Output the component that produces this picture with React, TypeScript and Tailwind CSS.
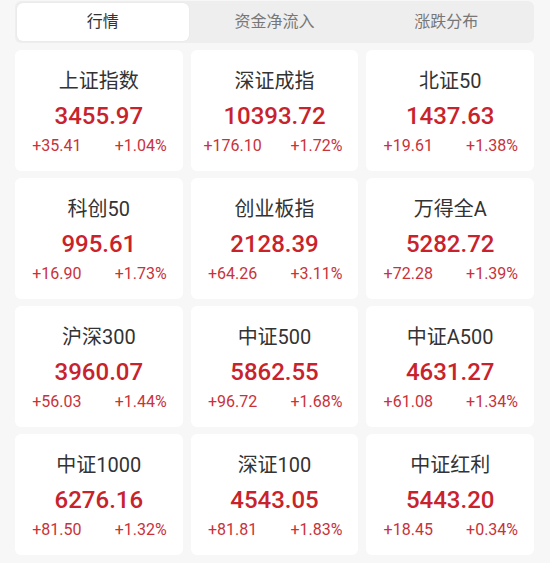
import React, { useState } from "react";

type IndexItem = {
  name: string;
  price: string;
  change: string;
  percent: string;
};

const indices: IndexItem[] = [
  { name: "上证指数", price: "3455.97", change: "+35.41", percent: "+1.04%" },
  { name: "深证成指", price: "10393.72", change: "+176.10", percent: "+1.72%" },
  { name: "北证50", price: "1437.63", change: "+19.61", percent: "+1.38%" },
  { name: "科创50", price: "995.61", change: "+16.90", percent: "+1.73%" },
  { name: "创业板指", price: "2128.39", change: "+64.26", percent: "+3.11%" },
  { name: "万得全A", price: "5282.72", change: "+72.28", percent: "+1.39%" },
  { name: "沪深300", price: "3960.07", change: "+56.03", percent: "+1.44%" },
  { name: "中证500", price: "5862.55", change: "+96.72", percent: "+1.68%" },
  { name: "中证A500", price: "4631.27", change: "+61.08", percent: "+1.34%" },
  { name: "中证1000", price: "6276.16", change: "+81.50", percent: "+1.32%" },
  { name: "深证100", price: "4543.05", change: "+81.81", percent: "+1.83%" },
  { name: "中证红利", price: "5443.20", change: "+18.45", percent: "+0.34%" },
];

const tabs = ["行情", "资金净流入", "涨跌分布"];

const IndexCard = ({ item }: { item: IndexItem }) => {
  return (
    <div className="h-[121px] rounded-md bg-white pt-[17px] text-center">
      <div className="text-[20px] leading-[28px] text-[#333333]">
        {item.name}
      </div>
      <div className="mt-[6px] text-[24px] leading-[30px] font-medium text-[#c8232c]">
        {item.price}
      </div>
      <div className="mt-[5px] grid grid-cols-2 text-[16px] leading-[20px] text-[#c8323a]">
        <span>{item.change}</span>
        <span>{item.percent}</span>
      </div>
    </div>
  );
};

export default function App() {
  const [active, setActive] = useState(0);

  return (
    <div
      className="min-h-[563px] w-[550px] bg-[#f7f7f7] pl-[15px] pr-[16px] pt-[1px]"
      style={{ fontFamily: "Roboto, 'Noto Sans CJK SC', sans-serif" }}
    >
      <div className="flex h-[42px] rounded-md bg-[#eeeeee] p-[2px]">
        {tabs.map((tab, index) => (
          <button
            key={tab}
            onClick={() => setActive(index)}
            className={
              index === active
                ? "flex-1 rounded-md bg-white text-[16px] text-[#333333] shadow-[0_0_2px_rgba(0,0,0,0.06)]"
                : "flex-1 rounded-md text-[16px] text-[#777777]"
            }
          >
            {tab}
          </button>
        ))}
      </div>

      <div className="mt-[7px] grid grid-cols-3 gap-x-2 gap-y-[7px]">
        {indices.map((item) => (
          <IndexCard key={item.name} item={item} />
        ))}
      </div>
    </div>
  );
}
